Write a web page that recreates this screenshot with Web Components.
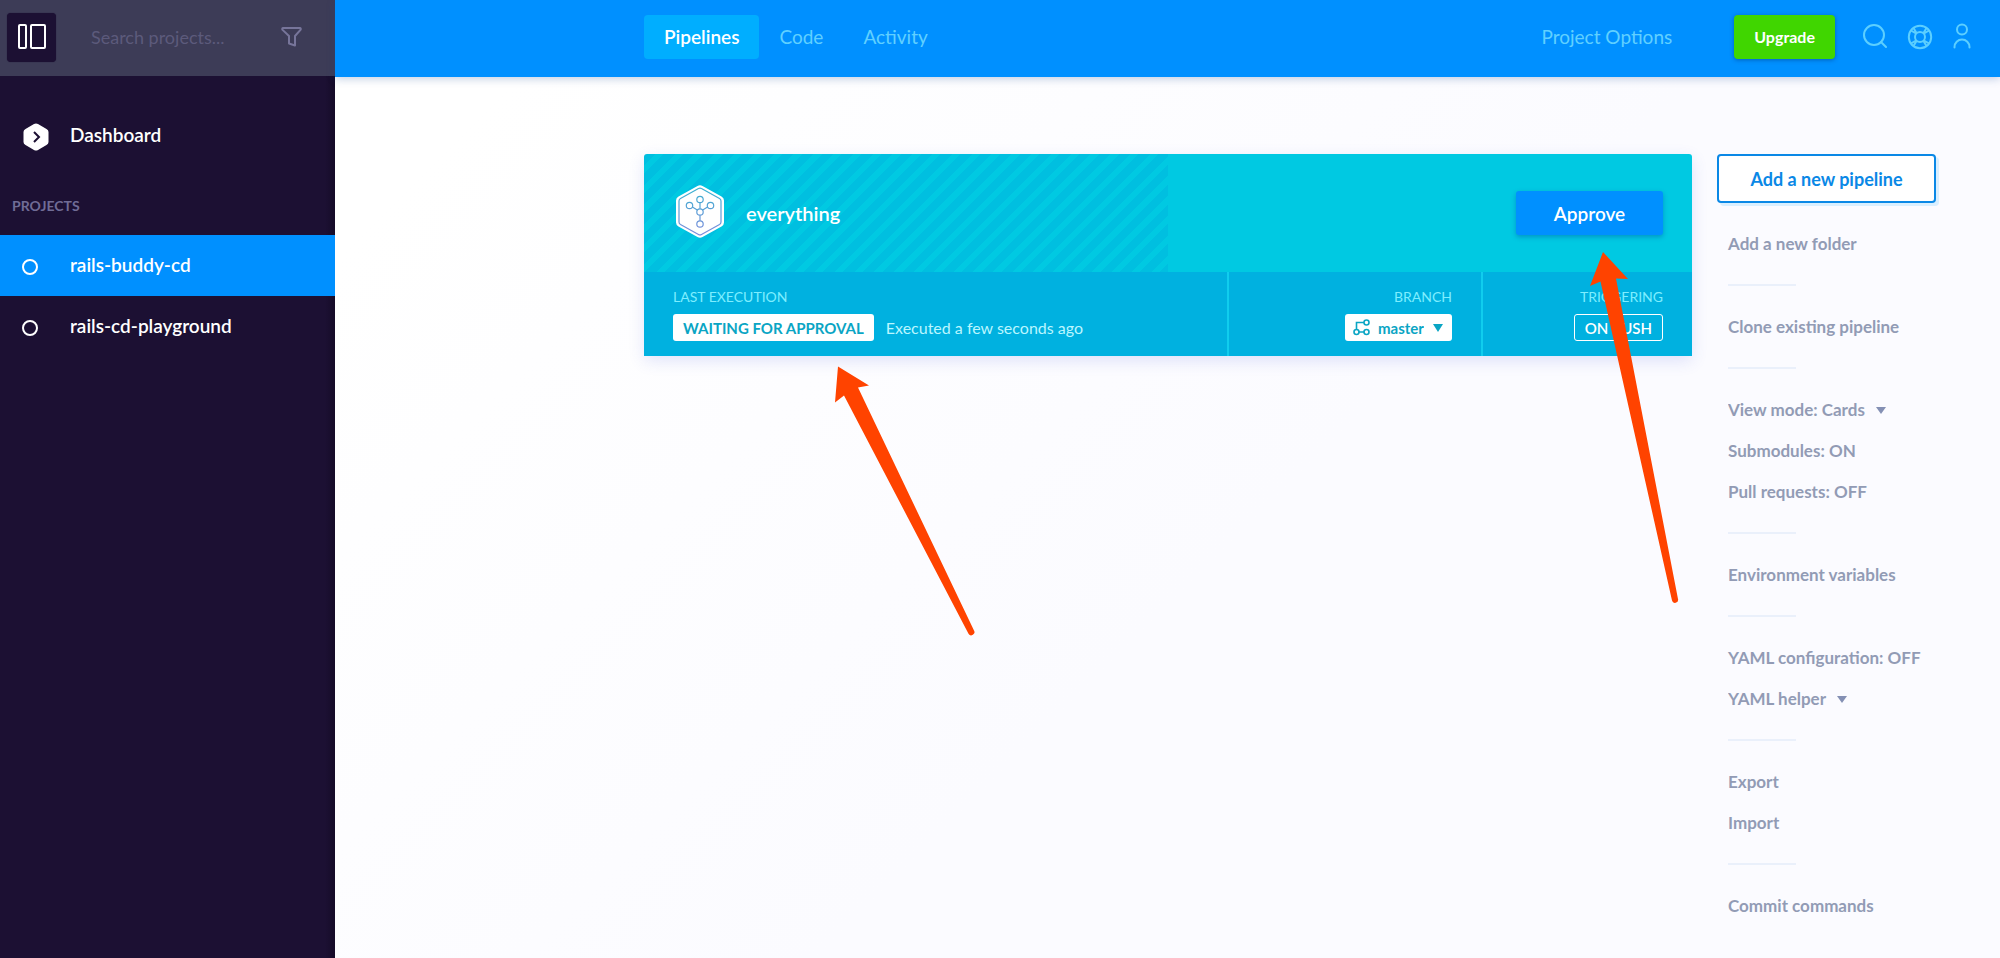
<!DOCTYPE html>
<html lang="en">
<head>
<meta charset="utf-8">
<title>Pipelines - rails-buddy-cd</title>
<style>
    html, body {
        height: 100%;
    }
    body {
        margin: 0;
        font-family: Lato, "Open Sans", sans-serif;
        font-size: 19px;
        color: #929bb5;
    }
</style>
</head>
<body>
<app-shell>
    <side-bar slot="side">
        <nav-item icon="hexagon">Dashboard</nav-item>
        <nav-item icon="circle" slot="projects" active>rails-buddy-cd</nav-item>
        <nav-item icon="circle" slot="projects">rails-cd-playground</nav-item>
    </side-bar>
    <top-bar slot="top">
        <tab-link active>Pipelines</tab-link>
        <tab-link>Code</tab-link>
        <tab-link>Activity</tab-link>
        <tab-link slot="options">Project Options</tab-link>
    </top-bar>
    <pipeline-card name="everything" status="WAITING FOR APPROVAL" time="Executed a few seconds ago" branch="master" trigger="ON PUSH"></pipeline-card>
    <action-menu slot="menu">
        <menu-link>Add a new folder</menu-link>
        <menu-rule></menu-rule>
        <menu-link>Clone existing pipeline</menu-link>
        <menu-rule></menu-rule>
        <menu-select label="View mode" value="View mode: Cards"></menu-select>
        <menu-link>Submodules: ON</menu-link>
        <menu-link>Pull requests: OFF</menu-link>
        <menu-rule></menu-rule>
        <menu-link>Environment variables</menu-link>
        <menu-rule></menu-rule>
        <menu-link>YAML configuration: OFF</menu-link>
        <menu-select label="YAML helper" value="YAML helper"></menu-select>
        <menu-rule></menu-rule>
        <menu-link>Export</menu-link>
        <menu-link>Import</menu-link>
        <menu-rule></menu-rule>
        <menu-link>Commit commands</menu-link>
    </action-menu>
</app-shell>

<script>
class AppShell extends HTMLElement {
    constructor() {
        super();
        this.attachShadow({ mode: 'open' });
        this.shadowRoot.innerHTML = `
            <style>
                :host {
                    display: grid;
                    grid-template-columns: 335px 1fr;
                    grid-template-rows: 77px 1fr;
                    min-height: 100%;
                    background: linear-gradient(135deg, #fff 20%, #fbfbff 60%);
                }
                .side {
                    grid-row: 1 / 3;
                    display: flex;
                    min-width: 0;
                }
                main {
                    display: flex;
                    align-items: flex-start;
                    gap: 25px;
                    padding: 77px 64px 0 309px;
                }
                ::slotted(pipeline-card) {
                    flex: 1;
                }
            </style>
            <div class="side"><slot name="side"></slot></div>
            <slot name="top"></slot>
            <main>
                <slot></slot>
                <slot name="menu"></slot>
            </main>
        `;
    }
}

class SideBar extends HTMLElement {
    constructor() {
        super();
        this.attachShadow({ mode: 'open' });
        this.shadowRoot.innerHTML = `
            <style>
                :host {
                    display: block;
                    flex: 1;
                    min-width: 0;
                    background: linear-gradient(to left, #150b28, #1c1033 10px);
                }
                .search {
                    display: flex;
                    align-items: center;
                    height: 76px;
                    padding: 0 33px 2px 7px;
                    box-sizing: border-box;
                    background: #3d3c57;
                }
                button {
                    display: flex;
                    padding: 0;
                    border: 0;
                    background: none;
                    color: #77759a;
                    cursor: pointer;
                }
                .toggle {
                    flex: none;
                    width: 49px;
                    height: 49px;
                    align-items: center;
                    justify-content: center;
                    border-radius: 4px;
                    background: #1c1033;
                    color: #fff;
                    box-shadow: 0 0 1px #1c1033;
                }
                input {
                    flex: 1;
                    min-width: 0;
                    padding: 0;
                    margin-left: 35px;
                    border: 0;
                    outline: 0;
                    background: none;
                    font: inherit;
                    font-size: 18px;
                    color: #fff;
                }
                input::placeholder {
                    color: #5c5a7b;
                    opacity: 1;
                }
                nav {
                    padding-top: 29px;
                }
                h2 {
                    margin: 29px 0 18px 12px;
                    font-size: 14px;
                    line-height: 22px;
                    font-weight: 700;
                    color: #706c96;
                }
            </style>
            <div class="search">
                <button class="toggle" aria-label="Toggle sidebar">
                    <svg width="30" height="26" viewBox="0 0 30 26" fill="none" stroke="currentColor" stroke-width="2"><rect x="2" y="1" width="7" height="23" rx="1"/><rect x="14" y="1" width="14" height="23" rx="1"/></svg>
                </button>
                <input type="text" aria-label="Search projects" placeholder="Search projects...">
                <button aria-label="Filter">
                    <svg width="21" height="20" viewBox="0 0 21 20" fill="none" stroke="currentColor" stroke-width="2" stroke-linejoin="round"><path d="M2 1h17q1 0 .7 1.600L14 9v9.500l-6-2V9L1.300 2.600Q1 1 2 1z"/></svg>
                </button>
            </div>
            <nav>
                <slot></slot>
                <h2>PROJECTS</h2>
                <slot name="projects"></slot>
            </nav>
        `;
    }
}

class NavItem extends HTMLElement {
    static icons = {
        hexagon: '<svg width="26" height="28" viewBox="0 0 26 28"><path d="M11 1q2-1 4 0l8.500 5q2 1 2 3v10q0 2-2 3L15 27q-2 1-4 0L2.500 22q-2-1-2-3V9q0-2 2-3z" fill="#fff"/><path d="M11 9l5 5-5 5" fill="none" stroke="#1c1033" stroke-width="2"/></svg>',
        circle: '<svg width="18" height="18" viewBox="0 0 18 18"><circle cx="9" cy="9" r="7" fill="none" stroke="#fff" stroke-width="2"/></svg>'
    };

    constructor() {
        super();
        this.attachShadow({ mode: 'open' });
        this.shadowRoot.innerHTML = `
            <style>
                :host {
                    display: block;
                }
                a {
                    display: grid;
                    grid-template-columns: 70px 1fr;
                    align-items: center;
                    height: 61px;
                    padding-bottom: 2px;
                    box-sizing: border-box;
                    color: #fff;
                    font-weight: 600;
                    text-decoration: none;
                }
                :host([active]) a {
                    background: #0090ff;
                }
                span {
                    display: flex;
                    padding: 4px 0 0 21px;
                }
                svg {
                    display: block;
                }
                .hexagon {
                    padding-left: 23px;
                }
            </style>
            <a href="#"><span></span><slot></slot></a>
        `;
    }

    connectedCallback() {
        const icon = this.getAttribute('icon');
        const box = this.shadowRoot.querySelector('span');
        box.className = icon;
        box.innerHTML = NavItem.icons[icon];
    }
}

class TopBar extends HTMLElement {
    constructor() {
        super();
        this.attachShadow({ mode: 'open' });
        this.shadowRoot.innerHTML = `
            <style>
                :host {
                    display: flex;
                    align-items: center;
                    padding: 0 29px 4px 309px;
                    background: #0090ff;
                    color: #60d0ff;
                    box-shadow: 0 2px 8px rgba(20, 70, 150, .25);
                }
                .right {
                    display: flex;
                    align-items: center;
                    margin-left: auto;
                }
                .upgrade {
                    height: 44px;
                    margin: 0 28px 0 42px;
                    padding: 0 20px;
                    border: 0;
                    border-radius: 4px;
                    background: #40d600;
                    box-shadow: 0 1px 4px rgba(0, 50, 120, .5);
                    color: #fff;
                    font: 700 16px Lato, sans-serif;
                }
                .icon {
                    display: flex;
                    padding: 0;
                    border: 0;
                    background: none;
                    color: #5ccfff;
                    cursor: pointer;
                }
                .icons {
                    display: flex;
                    align-items: center;
                    gap: 20px;
                }
            </style>
            <slot></slot>
            <div class="right">
                <slot name="options"></slot>
                <button class="upgrade">Upgrade</button>
                <div class="icons">
                    <button class="icon" aria-label="Search">
                        <svg width="24" height="25" viewBox="0 0 24 25" fill="none" stroke="currentColor" stroke-width="2" stroke-linecap="round"><circle cx="11" cy="11" r="10"/><path d="M18 18l5 5"/></svg>
                    </button>
                    <button class="icon" aria-label="Help">
                        <svg width="26" height="26" viewBox="0 0 26 26" fill="none" stroke="currentColor" stroke-width="2"><circle cx="13" cy="13" r="11.200"/><circle cx="13" cy="13" r="5"/><path d="M4 6.500l5 3M6.500 4l3 5M19.500 4l-3 5M22 6.500l-5 3M22 19.500l-5-3M19.500 22l-3-5M6.500 22l3-5M4 19.500l5-3"/></svg>
                    </button>
                    <button class="icon" aria-label="Account">
                        <svg width="18" height="30" viewBox="0 0 18 30" fill="none" stroke="currentColor" stroke-width="2" stroke-linecap="round"><circle cx="9" cy="7.500" r="5"/><path d="M1.500 25.500v-.5a7.500 7.500 0 0 1 15 0v.5"/></svg>
                    </button>
                </div>
            </div>
        `;
    }
}

class TabLink extends HTMLElement {
    constructor() {
        super();
        this.attachShadow({ mode: 'open' });
        this.shadowRoot.innerHTML = `
            <style>
                :host {
                    display: block;
                }
                a {
                    display: block;
                    padding: 0 20px;
                    border-radius: 4px;
                    line-height: 44px;
                    color: inherit;
                    text-decoration: none;
                }
                :host([active]) a {
                    background: #00aeff;
                    color: #fff;
                    font-weight: 600;
                }
            </style>
            <a href="#"><slot></slot></a>
        `;
    }
}

class PipelineCard extends HTMLElement {
    constructor() {
        super();
        this.attachShadow({ mode: 'open' });
        this.shadowRoot.innerHTML = `
            <style>
                :host {
                    display: block;
                    position: relative;
                    border-radius: 3px;
                    color: #fff;
                    box-shadow: 0 5px 16px rgba(60, 80, 220, .15);
                }
                .head {
                    display: flex;
                    align-items: center;
                    height: 118px;
                    padding: 0 29px 0 32px;
                    border-radius: 3px 3px 0 0;
                    background:
                        repeating-linear-gradient(135deg, #00bfe0 0 8px, #00c9e2 8px 14px) 0 0 / 50% 100% no-repeat,
                        #00c9e2;
                }
                h1 {
                    flex: 1;
                    margin: 0 0 0 22px;
                    font-size: 20px;
                    font-weight: 600;
                }
                button {
                    width: 147px;
                    height: 44px;
                    border: 0;
                    border-radius: 3px;
                    background: #0090ff;
                    box-shadow: 0 2px 5px rgba(0, 70, 160, .4);
                    color: #fff;
                    font: 600 19px Lato, sans-serif;
                }
                .foot {
                    display: grid;
                    grid-template-columns: 1fr 252px 209px;
                    gap: 0 2px;
                    height: 84px;
                    background: #10cdee;
                }
                .cell {
                    display: flex;
                    flex-direction: column;
                    align-items: flex-end;
                    gap: 8px;
                    padding: 16px 29px 0;
                    background: #00b1e0;
                }
                .cell:first-child {
                    align-items: flex-start;
                }
                .label {
                    font-size: 14px;
                    line-height: 18px;
                    color: #7eeeff;
                }
                .line {
                    display: flex;
                    align-items: center;
                    gap: 12px;
                    font-size: 16px;
                    line-height: 24px;
                    color: #baf6ff;
                }
                .badge {
                    display: flex;
                    align-items: center;
                    height: 27px;
                    box-sizing: border-box;
                    padding: 0 10px;
                    border-radius: 3px;
                    background: #fff;
                    color: #0aa5c4;
                    font-size: 15px;
                    font-weight: 700;
                }
                .branch {
                    gap: 8px;
                    padding: 0 8px;
                }
                .branch svg {
                    flex: none;
                }
                select {
                    appearance: none;
                    padding: 0;
                    border: 0;
                    background: none;
                    color: inherit;
                    font: inherit;
                }
                .trigger {
                    border: 1px solid #fff;
                    background: none;
                    color: #fff;
                    font-weight: 600;
                }
                .arrow {
                    position: absolute;
                    pointer-events: none;
                }
                .to-status {
                    left: 190px;
                    top: 211px;
                }
                .to-approve {
                    right: 12px;
                    top: 97px;
                }
            </style>
            <div class="head">
                <svg width="48" height="56" viewBox="0 0 48 56" fill="none">
                    <defs><linearGradient id="ink" x1="0" y1="0" x2="0" y2="53" gradientUnits="userSpaceOnUse"><stop stop-color="#35b5d0"/><stop offset="1" stop-color="#8287dc"/></linearGradient></defs>
                    <path d="M21.500 1q2.500-1.400 5 0l19 10.500q2.500 1.500 2.500 4v22q0 2.500-2.500 4L26.500 52q-2.500 1.400-5 0L2.500 41.500Q0 40 0 37.500v-22q0-2.500 2.500-4z" fill="#fff"/>
                    <g stroke="url(#ink)" stroke-width="1.200">
                        <path d="M22.500 3.500q1.500-.9 3 0L43.500 13.500q1.500.9 1.500 2.500v21q0 1.600-1.500 2.500L25.500 49.500q-1.500.9-3 0L4.500 39.500Q3 38.600 3 37V16q0-1.600 1.500-2.500z"/>
                        <circle cx="24" cy="14.500" r="3.200"/><circle cx="13.500" cy="20.500" r="3.200"/><circle cx="34.500" cy="20.500" r="3.200"/><circle cx="24" cy="27" r="3.200"/><circle cx="24" cy="39" r="3.200"/>
                        <path d="M24 17.700v6.100M24 30.200v5.600M16.400 22l4.900 3M31.600 22l-4.900 3"/>
                    </g>
                </svg>
                <h1></h1>
                <button>Approve</button>
            </div>
            <div class="foot">
                <div class="cell">
                    <span class="label">LAST EXECUTION</span>
                    <div class="line"><span class="badge status"></span><span class="time"></span></div>
                </div>
                <div class="cell">
                    <label class="label" for="branch">BRANCH</label>
                    <div class="badge branch">
                        <svg width="17" height="17" viewBox="0 0 17 17" fill="none" stroke="currentColor" stroke-width="1.600"><circle cx="13.500" cy="3.500" r="2.500"/><circle cx="3.500" cy="13" r="2.500"/><circle cx="13.500" cy="13" r="2.500"/><path d="M11 3.500H3.500v7M6 13h5"/></svg>
                        <select id="branch"><option></option></select>
                        <svg width="12" height="8" viewBox="0 0 12 8" fill="currentColor"><path d="M1 0h10L6 8z"/></svg>
                    </div>
                </div>
                <div class="cell">
                    <span class="label">TRIGGERING</span>
                    <span class="badge trigger"></span>
                </div>
            </div>
            <svg class="arrow to-status" width="142" height="272" viewBox="0 0 142 272" fill="#ff4300"><path d="M4 1.500L35 20.500 24 22.500 140 265.500a3 3 0 0 1-5.500 3.200L10 30.500 1 37.500z"/></svg>
            <svg class="arrow to-approve" width="90" height="354" viewBox="0 0 90 354" fill="#ff4300"><path d="M13 1L38 28 26 27.500 88 348a3 3 0 0 1-6 1.500L10.500 30.500 0 35z"/></svg>
        `;
    }

    connectedCallback() {
        const root = this.shadowRoot;
        root.querySelector('h1').textContent = this.getAttribute('name');
        root.querySelector('.status').textContent = this.getAttribute('status');
        root.querySelector('.time').textContent = this.getAttribute('time');
        root.querySelector('option').textContent = this.getAttribute('branch');
        root.querySelector('.trigger').textContent = this.getAttribute('trigger');
    }
}

class ActionMenu extends HTMLElement {
    constructor() {
        super();
        this.attachShadow({ mode: 'open' });
        this.shadowRoot.innerHTML = `
            <style>
                :host {
                    display: block;
                    width: 219px;
                    font-size: 17px;
                    font-weight: 700;
                }
                button {
                    width: 100%;
                    height: 49px;
                    border: 2px solid #0a88e6;
                    border-radius: 4px;
                    background: #fff;
                    box-shadow: 3px 3px 0 #d9efff;
                    color: #0a88e6;
                    font: 700 18px Lato, sans-serif;
                }
                div {
                    padding: 20px 0 0 11px;
                }
            </style>
            <button>Add a new pipeline</button>
            <div><slot></slot></div>
        `;
    }
}

class MenuLink extends HTMLElement {
    constructor() {
        super();
        this.attachShadow({ mode: 'open' });
        this.shadowRoot.innerHTML = `
            <style>
                :host {
                    display: block;
                    line-height: 41px;
                    white-space: nowrap;
                }
                a {
                    color: inherit;
                    text-decoration: none;
                }
            </style>
            <a href="#"><slot></slot></a>
        `;
    }
}

class MenuSelect extends HTMLElement {
    constructor() {
        super();
        this.attachShadow({ mode: 'open' });
        this.shadowRoot.innerHTML = `
            <style>
                :host {
                    display: flex;
                    align-items: center;
                    gap: 10px;
                    height: 41px;
                }
                select {
                    appearance: none;
                    padding: 0;
                    border: 0;
                    background: none;
                    color: inherit;
                    font: inherit;
                }
            </style>
            <select><option></option></select>
            <svg width="10" height="8" viewBox="0 0 10 8" fill="#8490b4"><path d="M0 1h10L5 8z"/></svg>
        `;
    }

    connectedCallback() {
        this.shadowRoot.querySelector('select').setAttribute('aria-label', this.getAttribute('label'));
        this.shadowRoot.querySelector('option').textContent = this.getAttribute('value');
    }
}

class MenuRule extends HTMLElement {
    constructor() {
        super();
        this.attachShadow({ mode: 'open' });
        this.shadowRoot.innerHTML = `
            <style>
                :host {
                    display: block;
                    padding: 20px 0;
                }
                hr {
                    width: 68px;
                    height: 2px;
                    margin: 0;
                    border: 0;
                    background: #eaf0fb;
                }
            </style>
            <hr>
        `;
    }
}

customElements.define('app-shell', AppShell);
customElements.define('side-bar', SideBar);
customElements.define('nav-item', NavItem);
customElements.define('top-bar', TopBar);
customElements.define('tab-link', TabLink);
customElements.define('pipeline-card', PipelineCard);
customElements.define('action-menu', ActionMenu);
customElements.define('menu-link', MenuLink);
customElements.define('menu-select', MenuSelect);
customElements.define('menu-rule', MenuRule);
</script>
</body>
</html>
